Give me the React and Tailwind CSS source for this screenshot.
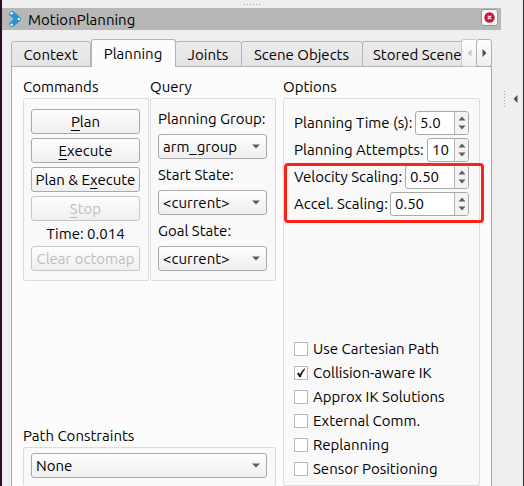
import React, { useId } from "react";

const buttonBase =
  "h-[25px] w-full rounded-[3px] border bg-linear-to-b from-[#fefefe] to-[#efefef] text-center whitespace-nowrap";

function PushButton({ children, disabled }) {
  return (
    <button
      type="button"
      disabled={disabled}
      className={`${buttonBase} flex items-center justify-center ${disabled ? "border-[#c6c6c6] text-[#bebebe]" : "border-[#a9a9a9] text-black"}`}
    >
      <span>{children}</span>
    </button>
  );
}

function Mnemonic({ children }) {
  return <span className="underline decoration-1 underline-offset-3">{children}</span>;
}

function ComboBox({ id, value, label }) {
  return (
    <div className="relative flex">
      <select
        id={id}
        aria-label={label}
        defaultValue={value}
        className="h-[25px] w-full appearance-none rounded-[3px] border border-[#a9a9a9] bg-linear-to-b from-[#fefefe] to-[#efefef] px-1 text-black"
      >
        <option>{value}</option>
      </select>
      <svg className="pointer-events-none absolute top-[10px] right-[7px]" width="8" height="5" viewBox="0 0 8 5">
        <path d="M0 0.5h8L4 4.5z" fill="#5f5f5f" />
      </svg>
    </div>
  );
}

function Field({ label, value }) {
  const id = useId();
  return (
    <div>
      <label htmlFor={id} className="mb-[5px] block leading-5 whitespace-nowrap">{label}</label>
      <ComboBox id={id} value={value} />
    </div>
  );
}

function SpinRow({ label, value, width }) {
  const id = useId();
  return (
    <div className="flex h-6 items-center justify-between">
      <label htmlFor={id} className="whitespace-nowrap">{label}</label>
      <div className={`flex h-6 shrink-0 overflow-hidden rounded-[3px] border border-[#a9a9a9] bg-white ${width}`}>
        <input id={id} type="text" defaultValue={value} className="min-w-0 flex-1 bg-transparent pl-1 outline-none" />
        <div className="flex w-[14px] shrink-0 flex-col border-l border-[#b4b4b4] bg-[#f3f3f3]">
          <button type="button" aria-label="Increase" className="flex flex-1 items-end justify-center pb-px">
            <svg width="8" height="5" viewBox="0 0 8 5"><path d="M0.5 4.5h7L4 0.5z" fill="#5f5f5f" /></svg>
          </button>
          <button type="button" aria-label="Decrease" className="flex flex-1 items-start justify-center pt-[3px]">
            <svg width="8" height="5" viewBox="0 0 8 5"><path d="M0.5 0.5h7L4 4.5z" fill="#5f5f5f" /></svg>
          </button>
        </div>
      </div>
    </div>
  );
}

function CheckRow({ label, checked }) {
  return (
    <label className="flex h-6 items-center gap-[5px] whitespace-nowrap">
      <span className="relative flex">
        <input
          type="checkbox"
          defaultChecked={checked}
          className="peer h-[14px] w-[14px] appearance-none border border-[#b9b9b9] bg-white"
        />
        <svg className="pointer-events-none absolute inset-0 hidden peer-checked:block" width="14" height="14" viewBox="0 0 14 14">
          <path d="M3 7.2 L4.8 6.5 L6 8.6 C7 6.2 8.4 4.2 10.4 2.5 L11.2 3 C9.2 5.5 7.9 8 6.9 11 L5.3 11.2z" fill="#111" />
        </svg>
      </span>
      {label}
    </label>
  );
}

const groupBox = "rounded-[2px] border border-[#dcdcdc] bg-[#f9f9f9]";

function Group({ title, className = "", boxClass = "", children }) {
  return (
    <section className={`flex flex-col ${className}`}>
      <h2 className="h-[23px] leading-[23px] whitespace-nowrap">{title}</h2>
      <div className={`${groupBox} ${boxClass}`}>{children}</div>
    </section>
  );
}

function Tab({ children, width, active, align = "pr-px text-center" }) {
  return (
    <button
      type="button"
      role="tab"
      aria-selected={!!active}
      className={`shrink-0 rounded-t-[3px] border border-[#b4b4b4] whitespace-nowrap ${align} ${width} ${
        active ? "relative h-7 border-b-0 bg-[#fcfcfc]" : "-ml-px h-[26px] bg-linear-to-b from-[#ececec] to-[#e4e4e4] pt-[2px]"
      }`}
    >
      {children}
    </button>
  );
}

function Logo() {
  return (
    <svg width="12" height="16" viewBox="0 0 12 16" className="ml-[7px] shrink-0">
      <path d="M3 2.9 L9 8 L3 13.1" fill="none" stroke="#2a94cf" strokeWidth="5.6" strokeLinejoin="round" strokeLinecap="round" />
      <circle cx="2.6" cy="2.2" r="1.2" fill="#fff" />
      <circle cx="9.8" cy="8" r="1.2" fill="#fff" />
      <circle cx="2.6" cy="13.8" r="1.2" fill="#fff" />
    </svg>
  );
}

export default function App() {
  return (
    <div className="flex h-screen overflow-hidden border-r border-l-2 border-r-[#303030] border-l-[#2a0d28] bg-[#efefef] font-['Ubuntu','Noto_Sans',sans-serif] text-[15px] leading-5 text-black">
      <main className="flex min-w-0 flex-1 flex-col">
        <div className="flex h-2 shrink-0 justify-center pt-1">
          <div className="h-px w-4 bg-[repeating-linear-gradient(90deg,#a8a8a8_0_1px,transparent_1px_3px)]" />
        </div>
        <header className="flex h-[22px] shrink-0 items-center bg-[#b7b7b7] pr-[3px]">
          <Logo />
          <h1 className="ml-[7px] flex-1 pt-px">MotionPlanning</h1>
          <button
            type="button"
            aria-label="Close"
            className="mb-1 flex h-[17px] w-[17px] items-center justify-center self-end rounded-[3px] border border-[#979797] bg-[#f8f8f8]"
          >
            <svg width="11" height="11" viewBox="0 0 11 11" className="shrink-0">
              <circle cx="5.5" cy="5.5" r="5.2" fill="#c9193a" />
              <path d="M3.8 3.8l3.4 3.4M7.2 3.8L3.8 7.2" stroke="#fbdde2" strokeWidth="1.3" />
            </svg>
          </button>
        </header>

        <div className="mt-[9px] mr-[9px] ml-[9px] flex min-h-0 flex-1 flex-col">
          <div className="relative z-10 -mb-px flex h-7 shrink-0 items-end">
            <div role="tablist" className="flex h-7 min-w-0 flex-1 items-end overflow-hidden pl-px">
              <Tab width="w-[80px]">Context</Tab>
              <Tab width="w-[85px]" active>Planning</Tab>
              <Tab width="w-[67px]">Joints</Tab>
              <Tab width="w-[122px]">Scene Objects</Tab>
              <Tab width="w-[124px]" align="pl-[10px] text-left">Stored Scene</Tab>
            </div>
            <button type="button" disabled aria-label="Scroll tabs left" className="flex h-7 w-[15px] items-center justify-center rounded-l-[3px] border border-r-0 border-[#cbcbcb] bg-linear-to-b from-[#fefefe] to-[#efefef]">
              <svg width="5" height="8" viewBox="0 0 5 8"><path d="M4.5 0.5v7L0.5 4z" fill="#c4c4c4" /></svg>
            </button>
            <button type="button" aria-label="Scroll tabs right" className="flex h-7 w-4 items-center justify-center rounded-[3px] border border-[#b0b0b0] bg-linear-to-b from-[#fefefe] to-[#efefef]">
              <svg width="5" height="8" viewBox="0 0 5 8"><path d="M0.5 0v8L4.5 4z" fill="#4c4c4c" /></svg>
            </button>
          </div>

          <div className="flex min-h-0 flex-1 gap-[7px] border border-b-0 border-[#a9a9a9] bg-[#fcfcfc] pt-[8px] pr-[11px] pl-[11px]">
            <div className="flex min-w-0 flex-1 flex-col justify-between">
              <div className="grid grid-cols-2 gap-px">
                <Group title="Commands" boxClass="flex flex-col gap-1 pl-[7px] pr-2 pt-[10px] h-[183px]">
                  <PushButton><Mnemonic>P</Mnemonic>lan</PushButton>
                  <PushButton><Mnemonic>E</Mnemonic>xecute</PushButton>
                  <PushButton>Plan &amp; E<Mnemonic>x</Mnemonic>ecute</PushButton>
                  <PushButton disabled><Mnemonic>S</Mnemonic>top</PushButton>
                  <p className="h-[17px] text-center leading-[17px]">Time: 0.014</p>
                  <PushButton disabled>Clear octomap</PushButton>
                </Group>
                <Group title="Query" boxClass="flex flex-col gap-[6px] pl-[7px] pr-2 pt-[10px] h-[183px]">
                  <Field label="Planning Group:" value="arm_group" />
                  <Field label="Start State:" value="<current>" />
                  <Field label="Goal State:" value="<current>" />
                </Group>
              </div>
              <Group title="Path Constraints" boxClass="pl-[7px] pr-2 pt-[5px] h-[39px] border-b-0">
                <ComboBox label="Path Constraints" value="None" />
              </Group>
            </div>

            <Group
              title="Options"
              className="w-[197px] shrink-0"
              boxClass="relative flex flex-1 flex-col justify-between pt-[12px] pr-[10px] pl-[10px] pb-[4px]"
            >
              <div className="flex flex-col gap-[3px]">
                <SpinRow label="Planning Time (s):" value="5.0" width="w-[54px]" />
                <SpinRow label="Planning Attempts:" value="10" width="w-[42px]" />
                <SpinRow label="Velocity Scaling:" value="0.50" width="w-[64px]" />
                <SpinRow label="Accel. Scaling:" value="0.50" width="w-[79px]" />
              </div>
              <div className="pointer-events-none absolute top-[64px] -right-[5px] left-0 h-[60px] rounded-[4px] border-3 border-[#fb2418]" />
              <div className="flex flex-col">
                <CheckRow label="Use Cartesian Path" />
                <CheckRow label="Collision-aware IK" checked />
                <CheckRow label="Approx IK Solutions" />
                <CheckRow label="External Comm." />
                <CheckRow label="Replanning" />
                <CheckRow label="Sensor Positioning" />
              </div>
            </Group>
          </div>
        </div>
      </main>

      <aside className="flex w-[22px] shrink-0 items-start gap-2 pt-[91px] pl-[3px]">
        <div className="h-[17px] w-px bg-[repeating-linear-gradient(180deg,#a8a8a8_0_1px,transparent_1px_3px)]" />
        <svg width="5" height="8" viewBox="0 0 5 8" className="mt-1">
          <path d="M4.5 0v8L0.5 4z" fill="#4c4c4c" />
        </svg>
      </aside>
    </div>
  );
}
